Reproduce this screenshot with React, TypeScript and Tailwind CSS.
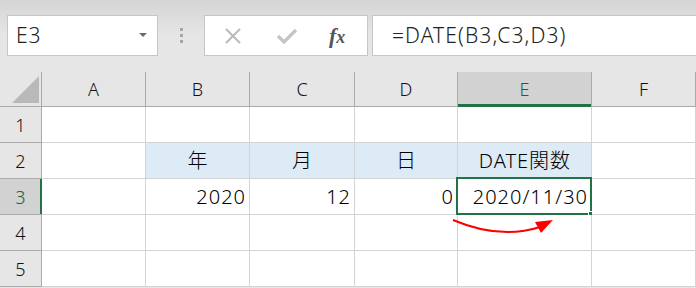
import React from "react";

const F = { fontFamily: '"Noto Sans", "Noto Sans CJK JP", sans-serif' };

const cols = ["A", "B", "C", "D", "E", "F"];

function HeaderCell({ label, selected }: { label: string; selected?: boolean }) {
  return (
    <div
      className={
        "relative flex items-center justify-center border-r border-b border-[#ababab] text-[18px] font-light " +
        (selected ? "bg-[#d2d2d2] text-[#1f5e3a]" : "bg-[#e6e6e6] text-[#111]")
      }
    >
      <span className="leading-none">{label}</span>
      {selected && <div className="absolute left-0 right-0 bottom-[-1px] h-[3px] bg-[#217346]" />}
    </div>
  );
}

function RowHeader({ n, selected }: { n: number; selected?: boolean }) {
  return (
    <div
      className={
        "relative flex items-center justify-center border-r border-b border-[#ababab] text-[18px] font-light " +
        (selected ? "bg-[#d2d2d2] text-[#1f5e3a]" : "bg-[#e6e6e6] text-[#111]")
      }
    >
      <span className="leading-none">{n}</span>
      {selected && <div className="absolute top-0 bottom-0 right-[-1px] w-[2px] bg-[#217346]" />}
    </div>
  );
}

function Cell({
  children,
  align = "right",
  blue,
  selected,
}: {
  children?: React.ReactNode;
  align?: "right" | "center";
  blue?: boolean;
  selected?: boolean;
}) {
  return (
    <div
      className={
        "relative flex items-center border-r border-b border-[#d4d4d4] text-[20px] font-light text-black px-[4px] " +
        (align === "right" ? "justify-end " : "justify-center ") +
        (blue ? "bg-[#ddebf7]" : "bg-white")
      }
    >
      <span className="leading-none tracking-[1px] mr-[-1px]">{children}</span>
      {selected && (
        <>
          <div className="absolute left-[-2px] top-[-2px] right-[-1px] bottom-[-1px] border-2 border-[#217346]" />
          <div className="absolute right-[-4px] bottom-[-4px] w-[7px] h-[7px] bg-[#217346] border border-white" />
        </>
      )}
    </div>
  );
}

export default function App() {
  return (
    <div className="w-[696px] h-[288px] overflow-hidden bg-[#e6e6e6] relative" style={F}>
      {/* toolbar */}
      <div className="h-[72px] bg-gradient-to-b from-[#d5d5d5] via-[#e6e6e6] to-[#e6e6e6] pt-[15px] flex items-start">
        <div className="ml-[7px] w-[151px] h-[41px] bg-white border border-[#c6c6c6] flex items-center justify-between pl-[8px] pr-[10px]">
          <span className="text-[21px] font-light text-[#222] leading-none tracking-[1px]">E3</span>
          <svg width="8" height="5" viewBox="0 0 8 5">
            <path d="M0 0 L8 0 L4 4 Z" fill="#6b6b6b" />
          </svg>
        </div>
        <div className="w-[46px] h-[41px] flex flex-col items-center justify-center gap-[3px]">
          <div className="w-[3px] h-[3px] bg-[#a6a6a6]" />
          <div className="w-[3px] h-[3px] bg-[#a6a6a6]" />
          <div className="w-[3px] h-[3px] bg-[#a6a6a6]" />
        </div>
        <div className="w-[164px] h-[41px] bg-white border border-[#c6c6c6] flex items-center">
          <svg className="ml-[18px]" width="20" height="20" viewBox="0 0 20 20">
            <path d="M3 3 L17 17 M17 3 L3 17" stroke="#bdbdbd" strokeWidth="2.2" fill="none" />
          </svg>
          <svg className="ml-[33px]" width="22" height="18" viewBox="0 0 22 18">
            <path d="M2 9 L8 15 L20 3" stroke="#c4c4c4" strokeWidth="3.2" fill="none" />
          </svg>
          <span
            className="ml-[31px] text-[22px] italic font-bold text-[#555] leading-none"
            style={{ fontFamily: '"Liberation Serif", serif' }}
          >
            f<span className="text-[18px]">x</span>
          </span>
        </div>
        <div className="ml-[4px] flex-1 h-[41px] bg-white border border-[#c6c6c6] border-r-0 flex items-center pl-[19px]">
          <span className="text-[21px] font-light text-[#222] leading-none tracking-[1.1px]">=DATE(B3,C3,D3)</span>
        </div>
      </div>

      {/* grid */}
      <div className="grid grid-cols-[42px_104px_104px_105px_103px_134px_104px] grid-rows-[35px_36px_36px_36px_36px_36px]">
        <div className="relative bg-[#e6e6e6] border-r border-b border-[#ababab]">
          <svg className="absolute left-[12px] top-[4px]" width="27" height="27" viewBox="0 0 27 27">
            <path d="M27 0 L27 27 L0 27 Z" fill="#b9b9b9" />
          </svg>
        </div>
        {cols.map((c) => (
          <HeaderCell key={c} label={c} selected={c === "E"} />
        ))}

        {/* row 1 */}
        <RowHeader n={1} />
        <Cell />
        <Cell />
        <Cell />
        <Cell />
        <Cell />
        <Cell />

        {/* row 2 */}
        <RowHeader n={2} />
        <Cell />
        <Cell align="center" blue>年</Cell>
        <Cell align="center" blue>月</Cell>
        <Cell align="center" blue>日</Cell>
        <Cell align="center" blue>DATE関数</Cell>
        <Cell />

        {/* row 3 */}
        <RowHeader n={3} selected />
        <Cell />
        <Cell>2020</Cell>
        <Cell>12</Cell>
        <Cell>0</Cell>
        <Cell selected>2020/11/30</Cell>
        <Cell />

        {/* row 4 */}
        <RowHeader n={4} />
        <Cell />
        <Cell />
        <Cell />
        <Cell />
        <Cell />
        <Cell />

        {/* row 5 */}
        <RowHeader n={5} />
        <Cell />
        <Cell />
        <Cell />
        <Cell />
        <Cell />
        <Cell />
      </div>

      {/* red arrow */}
      <svg className="absolute left-0 top-0 pointer-events-none" width="696" height="288" viewBox="0 0 696 288">
        <path d="M453 220 Q500 240 540 227" stroke="#ff0000" strokeWidth="2" fill="none" />
        <path d="M553 220 L535 222 L541 233 Z" fill="#ff0000" />
      </svg>
    </div>
  );
}
